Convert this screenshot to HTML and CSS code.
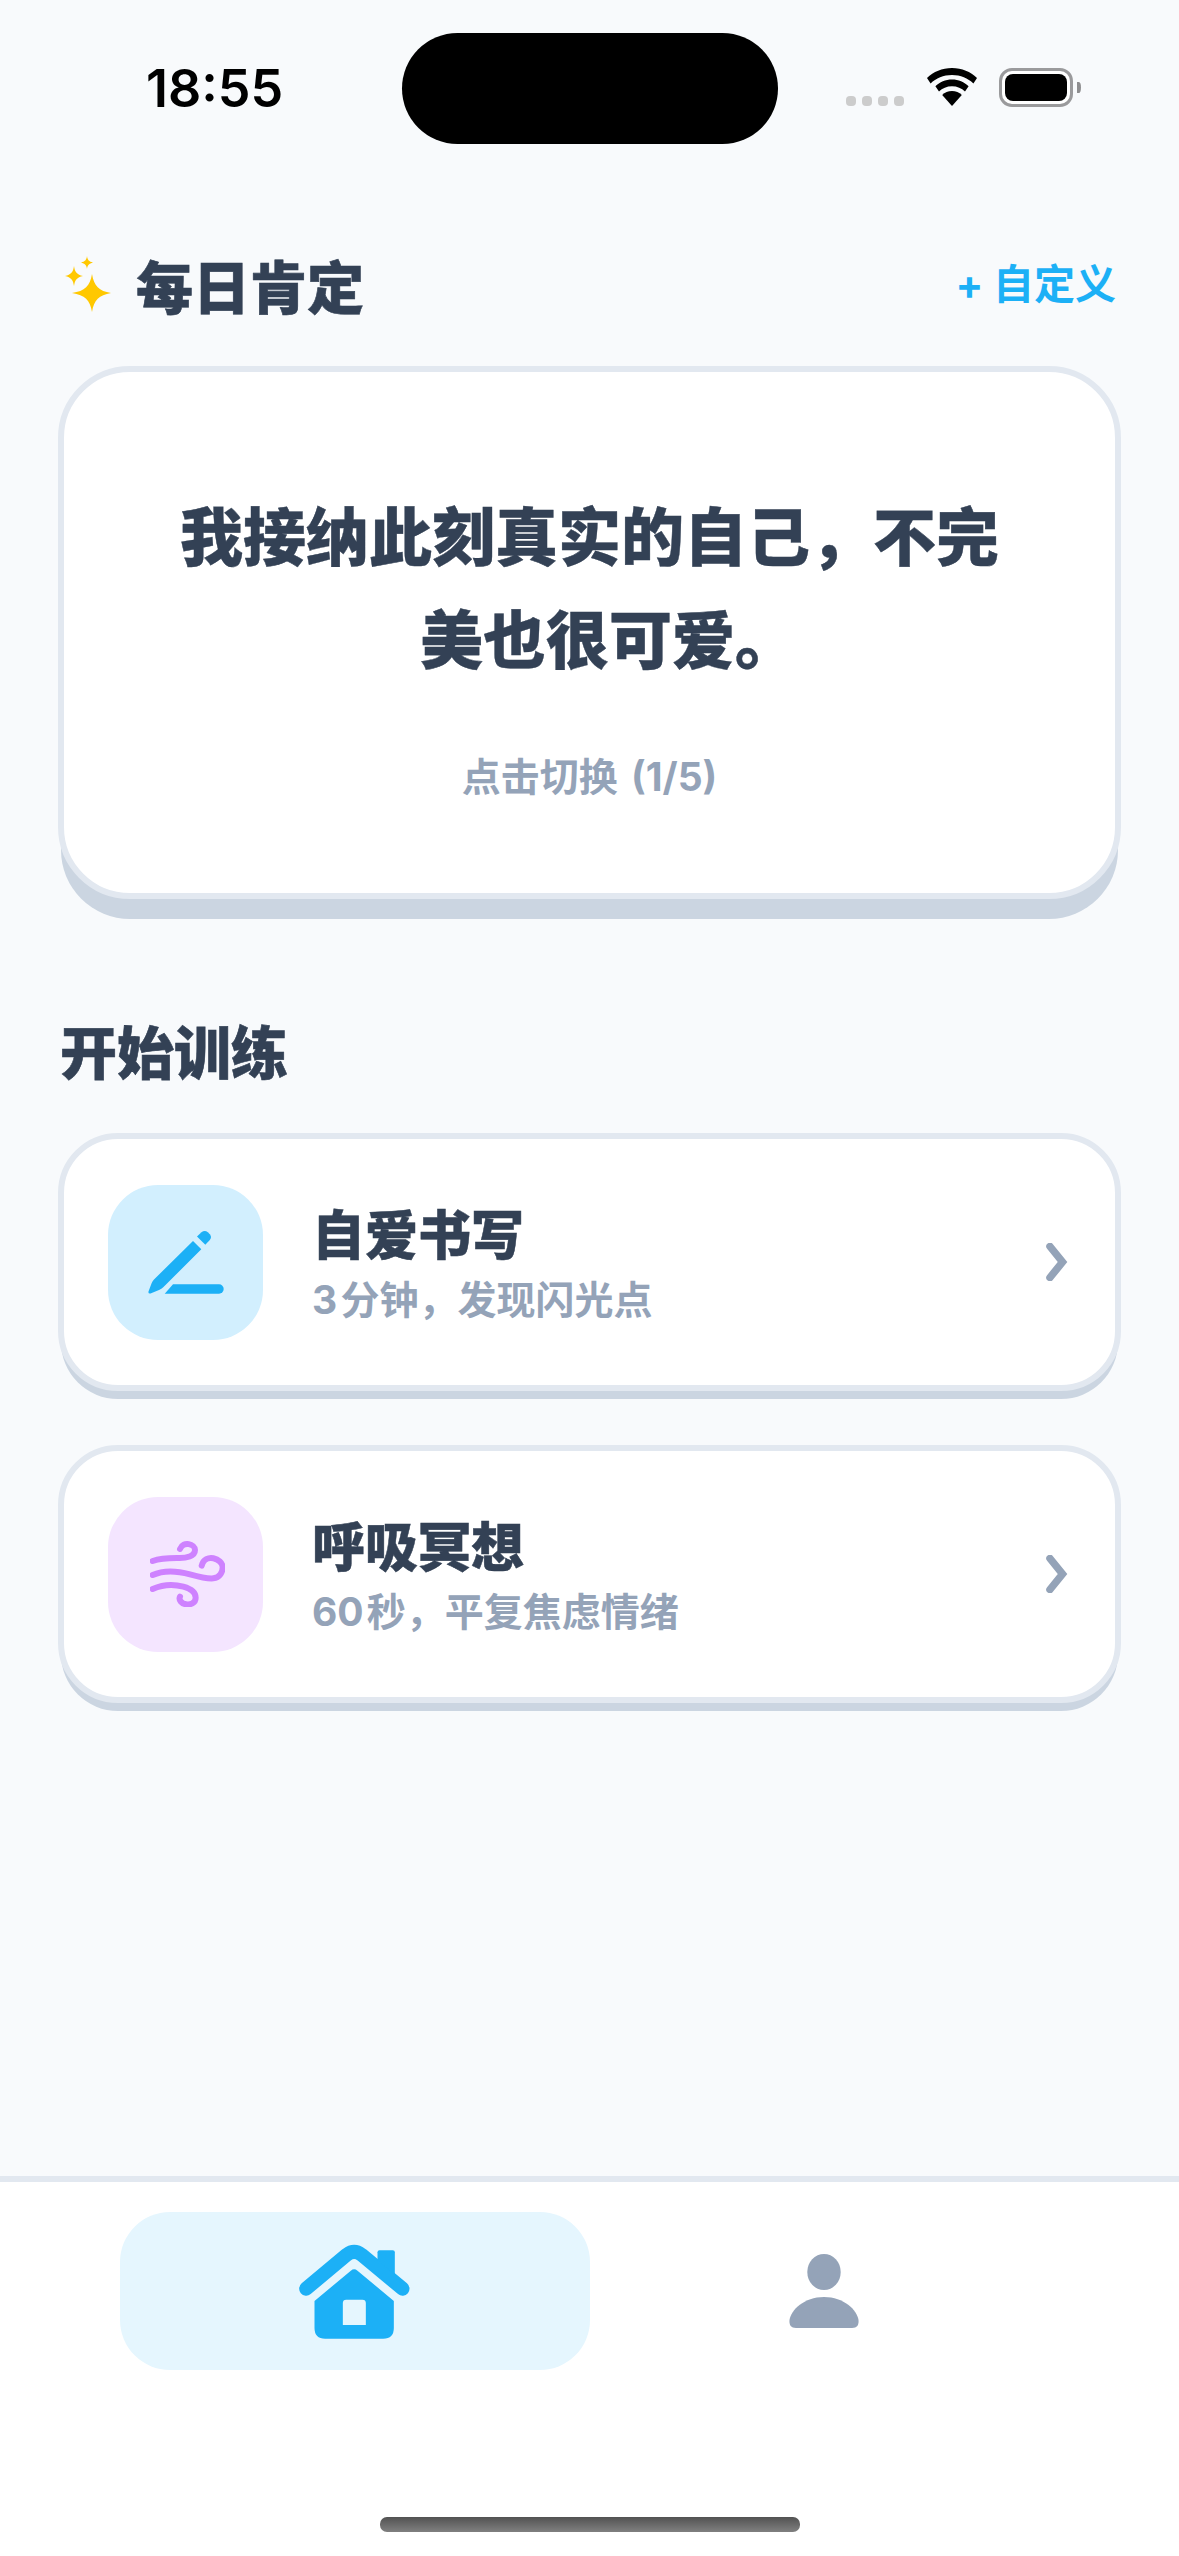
FILE: index.html
```html
<!DOCTYPE html>
<html lang="zh">
<head>
<meta charset="utf-8">
<title>每日肯定</title>
<link rel="stylesheet" href="styles.css">
</head>
<body>
<div class="app">
  <header class="status">
    <span class="time">18:55</span>
    <div class="island"></div>
    <div class="status-right">
      <div class="dots"><i></i><i></i><i></i><i></i></div>
      <svg class="wifi" width="52" height="38" viewBox="0 0 52 38"><path d="M26 0C16 0 7.500 3.800 1 10l3.600 5.500C10 10.200 17.500 7 26 7s16 3.200 21.400 8.500L51 10C44.500 3.800 36 0 26 0z"/><path d="M26 11.500c-6.500 0-12.300 2.500-16.600 6.700l3.600 5.400c3.300-3.300 7.900-5.300 13-5.300s9.700 2 13 5.300l3.600-5.400C38.300 14 32.500 11.500 26 11.500z"/><path d="M26 23c-3.800 0-7.300 1.500-9.800 4L26 38l9.800-11c-2.500-2.500-6-4-9.800-4z"/></svg>
      <div class="battery"><div class="battery-fill"></div></div>
      <div class="battery-cap"></div>
    </div>
  </header>

  <main class="content">
    <div class="head-row">
      <div class="head-left">
        <svg class="sparkle" width="46" height="56" viewBox="0 0 46 56"><path d="M27 18C29 30 34 35 46 37C34 39 29 44 27 56C25 44 20 39 7 37C20 35 25 30 27 18z"/><path d="M9 10c.8 6 3 8.500 9 10-6 1.500-8.200 4-9 10-.8-6-3-8.500-9-10 6-1.500 8.200-4 9-10z"/><path d="M22 0c.5 4 2 5.500 6 6.500-4 1-5.500 2.500-6 6.500-.5-4-2-5.500-6-6.500 4-1 5.500-2.500 6-6.500z"/></svg>
        <h1 class="title">每日肯定</h1>
      </div>
      <a class="custom">+ 自定义</a>
    </div>

    <section class="card quote-card">
      <p class="quote"><span class="quote-line">我接纳此刻真实的自己，不完</span><span class="quote-line quote-last">美也很可爱。</span></p>
      <p class="hint">点击切换 (1/5)</p>
    </section>

    <h2 class="section-title">开始训练</h2>

    <div class="list">
      <article class="card row">
        <div class="tile tile-blue">
          <svg width="76" height="63" viewBox="0 0 76 63"><path d="M53.500 1.200c2-1.600 4.500-1.600 6.300 0l2 2c1.600 1.800 1.600 4 0 5.800L57.300 13.700 49 5.500z"/><path d="M45 10l8.300 8.300L15.500 56Q13.500 58 11 59l-8.500 3.500Q0 63 .5 60.500l3-8Q4.500 50 6 48.500z"/><path d="M25 53.300H71a4.700 4.700 0 0 1 0 9.400H16.700z"/></svg>
        </div>
        <div class="row-text">
          <h3 class="row-title">自爱书写</h3>
          <p class="row-sub">3 分钟，发现闪光点</p>
        </div>
        <svg class="chev" width="22" height="38" viewBox="0 0 22 38"><path d="M4 3.500l12.500 15.500L4 34.500"/></svg>
      </article>

      <article class="card row">
        <div class="tile tile-purple">
          <svg width="75" height="66" viewBox="330 333 225 198"><path d="M338 393C360 385 385 384 410 384C440 386 465 378 465 360C465 342 430 332 420 357"/><path d="M338 435C370 420 410 422 450 433C475 440 500 447 520 445C540 443 548 425 548 412C548 385 495 368 485 407"/><path d="M338 477C365 465 400 462 430 470C455 477 467 490 467 503C467 520 450 525 438 523C425 521 415 510 420 500"/></svg>
        </div>
        <div class="row-text">
          <h3 class="row-title">呼吸冥想</h3>
          <p class="row-sub">60 秒，平复焦虑情绪</p>
        </div>
        <svg class="chev" width="22" height="38" viewBox="0 0 22 38"><path d="M4 3.500l12.500 15.500L4 34.500"/></svg>
      </article>
    </div>
  </main>

  <nav class="tabbar">
    <div class="tabs">
      <div class="tab tab-active">
        <svg width="111" height="96" viewBox="597 250 332 288"><path class="roof" d="M618 387L740 285Q762 268 784 285L907 387"/><path d="M838 272H878Q884 272 884 278V345L832 300V278Q832 272 838 272z"/><path fill-rule="evenodd" d="M752 333Q762 325 772 333L881 424V505Q881 537 849 537H675Q643 537 643 505V424zM738 420Q728 420 728 430V496H797V430Q797 420 787 420z"/></svg>
      </div>
      <div class="tab tab-idle">
        <svg width="70" height="74" viewBox="0 0 70 74"><ellipse cx="35" cy="18" rx="16.700" ry="18"/><path d="M35 43C55 43 68 56 69.500 66C70 71 68 74 63 74H7C2 74 0 71 .5 66C2 56 15 43 35 43z"/></svg>
      </div>
    </div>
    <div class="home-bar"></div>
  </nav>
</div>
</body>
</html>
```
FILE: styles.css
```css
* { box-sizing: border-box; margin: 0; padding: 0; }
html, body { width: 1179px; height: 2556px; overflow: hidden; }
body { background: #f8fafc; font-family: Inter, "Noto Sans CJK SC", sans-serif; color: #334155; }
.app { width: 1179px; height: 2556px; display: flex; flex-direction: column; background: #f8fafc; }

.status { height: 242px; flex: none; display: flex; align-items: flex-start; padding-top: 33px; }
.time { width: 402px; padding-left: 146px; padding-top: 26px; font: 600 52px/60px Inter, sans-serif; color: #000; }
.island { width: 376px; height: 111px; border-radius: 56px; background: #000; flex: none; }
.status-right { display: flex; align-items: flex-start; padding-top: 35px; padding-left: 68px; }
.dots { display: flex; gap: 6px; padding-top: 28px; width: 80px; }
.dots i { display: block; width: 10px; height: 10px; border-radius: 4px; background: #ccc; }
.wifi { fill: #000; flex: none; }
.battery { width: 74px; height: 39px; margin-left: 21px; border: 3px solid #9a9a9c; border-radius: 13px; padding: 3px; background: #fff; }
.battery-fill { width: 100%; height: 100%; background: #000; border-radius: 8px; }
.battery-cap { width: 4px; height: 11px; margin: 14px 0 0 4px; background: #8e8e90; border-radius: 0 50% 50% 0; }

.content { flex: 1; padding: 0 58px; display: flex; flex-direction: column; }
.head-row { display: flex; justify-content: space-between; align-items: center; height: 90px; padding-bottom: 6px; }
.head-left { display: flex; align-items: center; gap: 25px; padding-left: 7px; }
.sparkle { fill: #ffc800; flex: none; }
.title { font: 900 57px/70px "Noto Sans CJK SC", sans-serif; color: #334155; -webkit-text-stroke: .6px #334155; }
.custom { font: 700 41px/50px Inter, "Noto Sans CJK SC", sans-serif; color: #1cb0f6; padding-right: 5px; }

.card { background: #fff; border: 6px solid #e2e8f0; }
.quote-card { margin-top: 34px; height: 533px; border-radius: 72px; box-shadow: 0 23px 0 -3px #cbd5e1; padding: 109px 100px 0; text-align: center; }
.quote { font: 900 63px/103px "Noto Sans CJK SC", sans-serif; color: #334155; -webkit-text-stroke: .4px #334155; }
.quote-line { display: block; }
.quote-last { padding-left: 39px; }
.hint { margin-top: 65px; font: 700 39px/50px Inter, "Noto Sans CJK SC", sans-serif; word-spacing: 4px; color: #94a3b8; }

.section-title { margin-top: 115px; padding-left: 2px; font: 900 57px/70px "Noto Sans CJK SC", sans-serif; color: #334155; -webkit-text-stroke: .6px #334155; }

.list { margin-top: 49px; display: flex; flex-direction: column; gap: 54px; }
.row { height: 258px; border-radius: 60px; box-shadow: 0 11px 0 -3px #cbd5e1; display: flex; align-items: center; padding: 0 47px 0 44px; }
.tile { width: 155px; height: 155px; border-radius: 50px; display: flex; align-items: center; justify-content: center; flex: none; }
.tile-blue { background: #d2effe; }
.tile-blue svg { fill: #1cb0f6; }
.tile-purple { background: #f4e5ff; padding-left: 3px; }
.tile-purple svg { fill: none; stroke: #ce82ff; stroke-width: 18; stroke-linecap: round; }
.row-text { flex: 1; padding: 0 0 0 49px; }
.row-title { font: 900 53px/64px "Noto Sans CJK SC", sans-serif; color: #334155; -webkit-text-stroke: .5px #334155; }
.row-sub { font: 700 39px/50px Inter, "Noto Sans CJK SC", sans-serif; word-spacing: -6px; color: #94a3b8; margin-top: 11px; }
.chev { fill: none; stroke: #94a3b8; stroke-width: 7.5; stroke-linecap: round; stroke-linejoin: miter; flex: none; }

.tabbar { height: 380px; flex: none; background: #fff; border-top: 6px solid #e2e8f0; padding: 30px 120px 0; }
.tabs { display: flex; }
.tab { height: 158px; display: flex; align-items: center; justify-content: center; }
.tab-active { width: 470px; background: #e5f6fe; border-radius: 50px; padding-right: 2px; }
.tab-active svg { fill: #1cb0f6; }
.tab-active .roof { fill: none; stroke: #1cb0f6; stroke-width: 42; stroke-linecap: round; stroke-linejoin: round; }
.tab-idle { flex: 1; padding-right: 2px; }
.tab-idle svg { fill: #94a3b8; }
.home-bar { width: 420px; height: 15px; margin: 147px 0 0 260px; border-radius: 7px; background: linear-gradient(#525252, #808080); }
```
